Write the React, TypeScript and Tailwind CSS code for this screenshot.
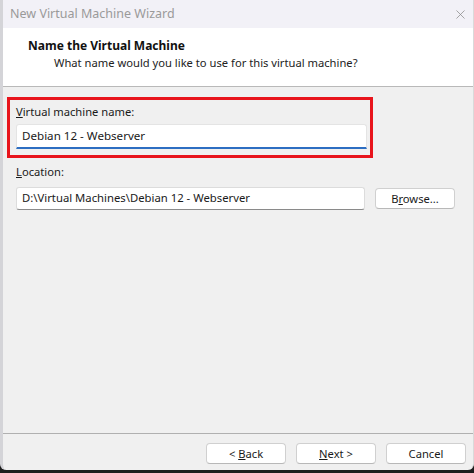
import React from "react";
import { X } from "lucide-react";

const WinButton = ({ children, className = "" }: { children: React.ReactNode; className?: string }) => (
  <button
    type="button"
    className={`h-[21px] rounded-[4px] border border-[#d0d0d0] border-b-[#b8b8b8] bg-white text-[11.2px] leading-none text-[#1a1a1a] ${className}`}
  >
    {children}
  </button>
);

export default function App() {
  return (
    <div className="h-[473px] w-[474px] overflow-hidden bg-[#1e1e1e] font-['Noto_Sans','Open_Sans',sans-serif]">
      <div className="flex h-[470px] w-[474px] flex-col overflow-hidden rounded-b-[6px] border-l-[3px] border-r border-l-[#d4d4d8] border-r-[#dadada] bg-[#f0f0f0]">
        {/* title bar */}
        <div className="flex h-[28px] shrink-0 items-center justify-between bg-[#f2f1f7] pl-[7px] pr-[5px]">
          <span className="text-[12.5px] text-[#9a9a9a]">New Virtual Machine Wizard</span>
          <X className="h-[15px] w-[15px] text-[#8a8a8a]" strokeWidth={1.2} />
        </div>

        {/* header */}
        <div className="h-[59px] shrink-0 border-b border-[#b9b9b9] bg-white pl-[25px] pt-[10px]">
          <div className="text-[12px] font-bold leading-[16px] text-[#111]">Name the Virtual Machine</div>
          <div className="pl-[26px] text-[11.2px] leading-[18px] text-[#222]">
            What name would you like to use for this virtual machine?
          </div>
        </div>

        {/* body */}
        <div className="flex-1 pl-[4px] pt-[10px]">
          <div className="w-[366px] border-[3px] border-[#e8141c] pb-[6px] pl-[6px] pr-[3px] pt-[3px]">
            <div className="text-[11.2px] leading-[18px] text-[#1a1a1a]">
              <span className="underline">V</span>irtual machine name:
            </div>
            <div className="mt-[3px] flex h-[25px] items-center rounded-t-[3px] border border-[#e4e4e4] border-b-2 border-b-[#2d6ec2] bg-white pl-[5px] text-[11.6px] text-[#1a1a1a]">
              Debian 12 - Webserver
            </div>
          </div>

          <div className="mt-[5px] pl-[9px] text-[11.2px] leading-[18px] text-[#1a1a1a]">
            <span className="underline">L</span>ocation:
          </div>
          <div className="mt-[6px] flex items-center gap-[10px] pl-[9px]">
            <div className="flex h-[23px] w-[349px] items-center rounded-[3px] border border-[#dcdcdc] border-b-[#8a8a8a] bg-white pl-[5px] text-[11.3px] text-[#1a1a1a]">
              D:\Virtual Machines\Debian 12 - Webserver
            </div>
            <WinButton className="w-[80px]">
              B<span className="underline">r</span>owse...
            </WinButton>
          </div>
        </div>

        {/* footer */}
        <div className="flex h-[37px] shrink-0 items-start justify-end gap-[10px] border-t border-[#b0b0b0] pr-[7px] pt-[9px]">
          <WinButton className="w-[80px]">
            &lt; <span className="underline">B</span>ack
          </WinButton>
          <WinButton className="w-[80px]">
            <span className="underline">N</span>ext &gt;
          </WinButton>
          <WinButton className="w-[80px]">Cancel</WinButton>
        </div>
      </div>
    </div>
  );
}
